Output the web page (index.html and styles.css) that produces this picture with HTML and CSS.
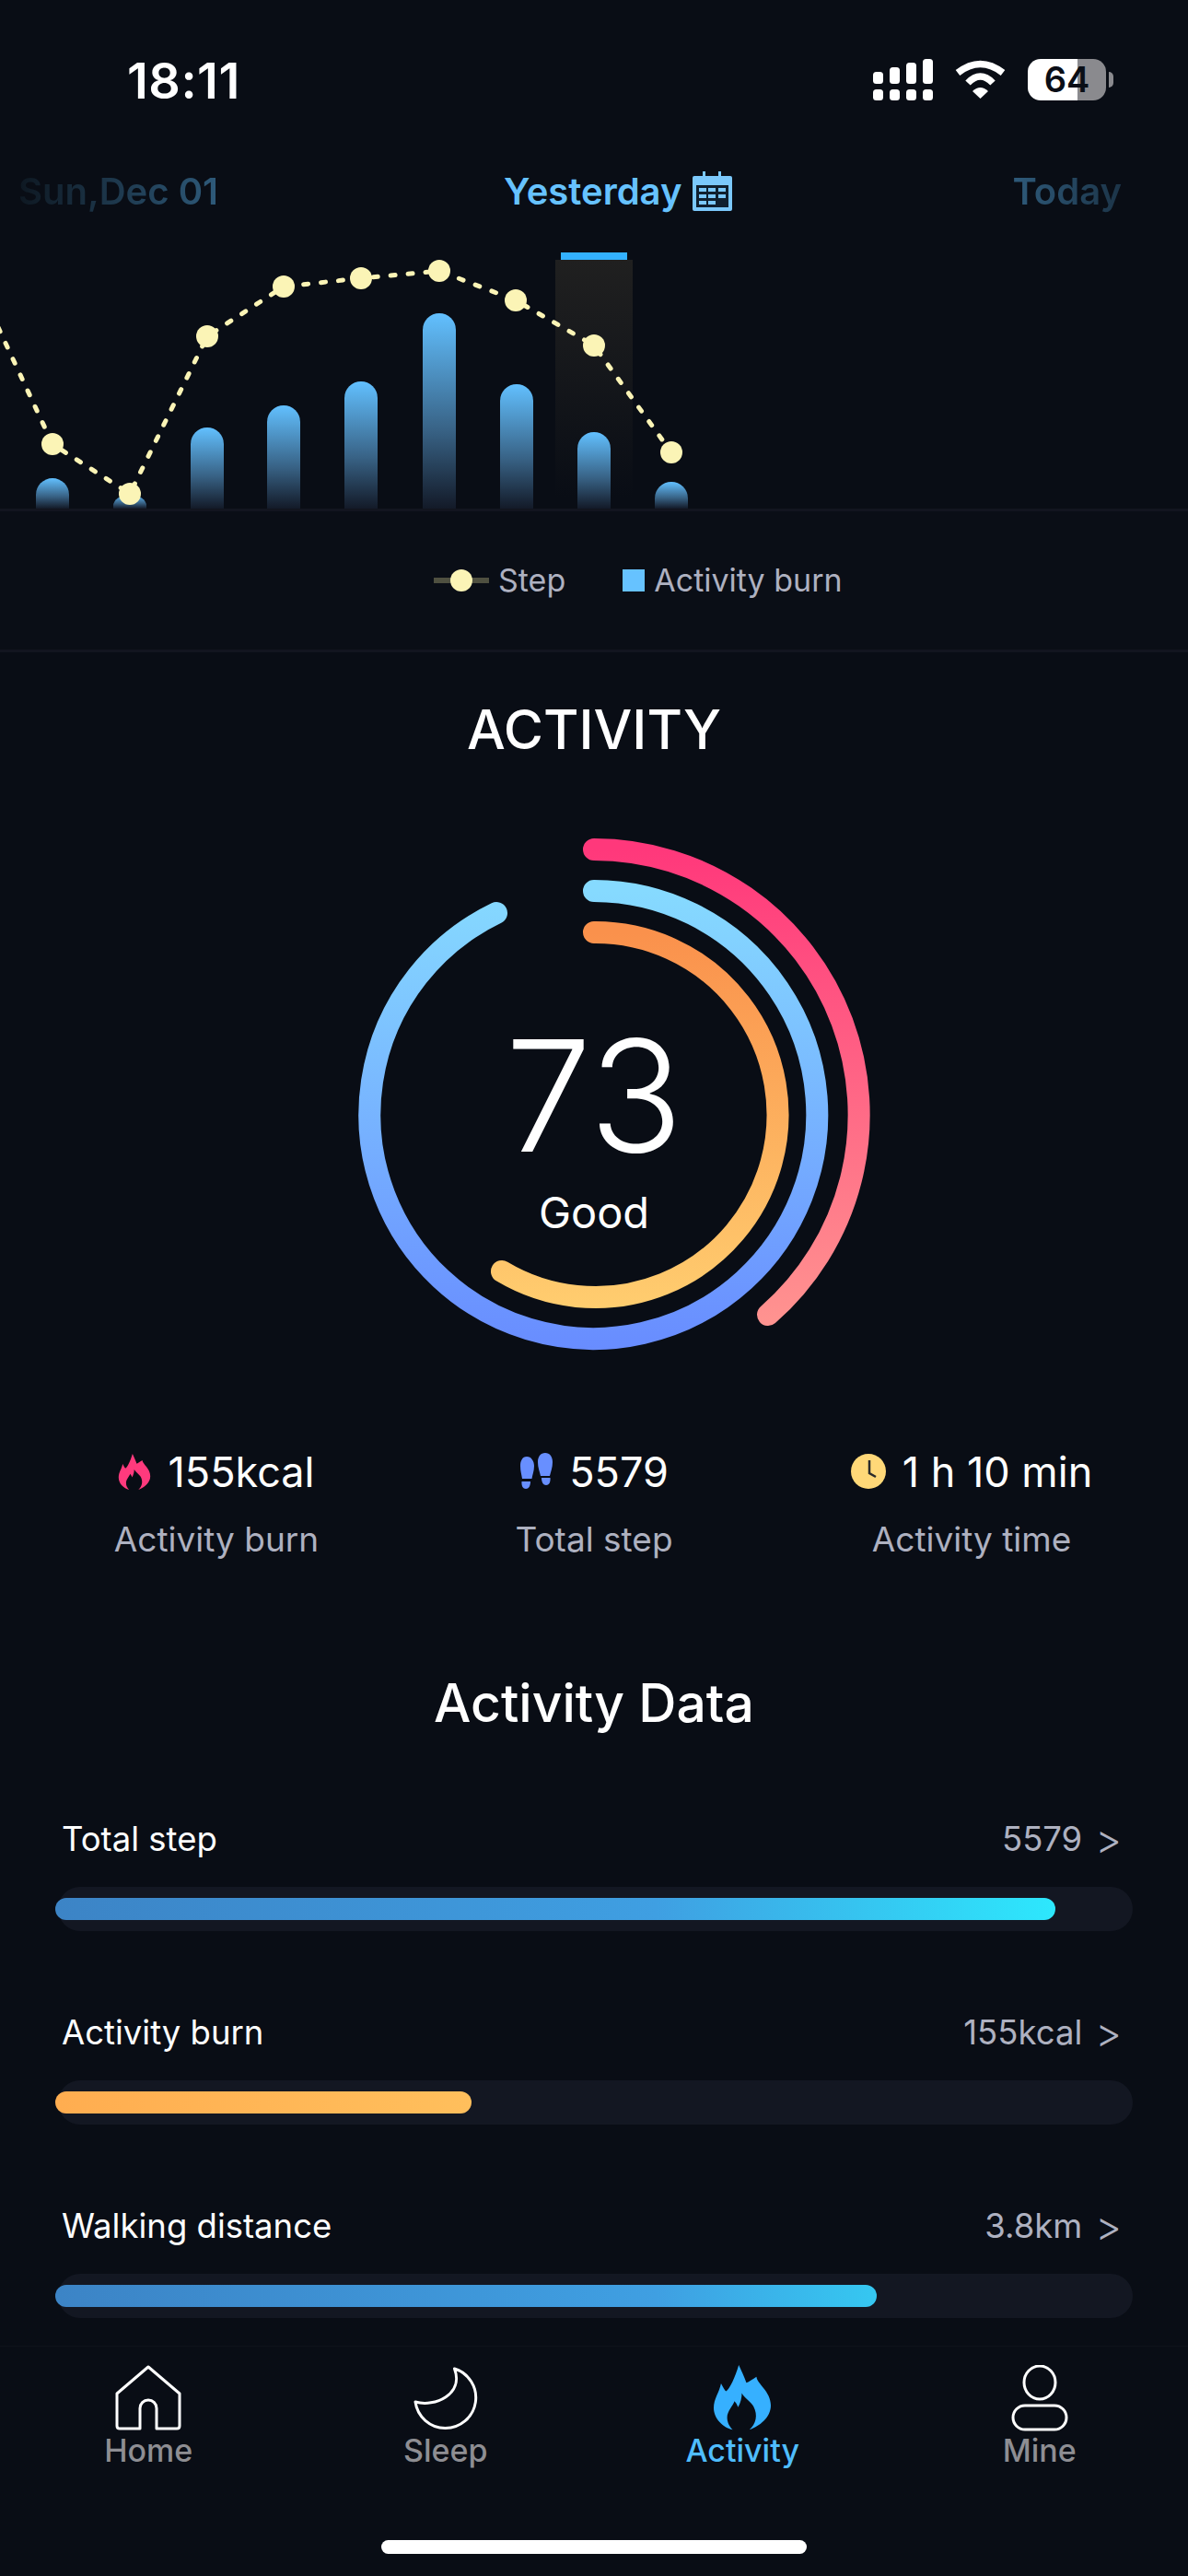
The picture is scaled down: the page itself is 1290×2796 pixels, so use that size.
FILE: index.html
```html
<!DOCTYPE html>
<html lang="en">
<head>
    <meta charset="UTF-8">
    <meta name="viewport" content="width=device-width, initial-scale=1.0">
    <title>Activity</title>
    <link rel="stylesheet" href="styles.css">
</head>
<body>
    <div class="status-bar">
        <div class="time">18:11</div>
        <div class="status-icons">
            <svg class="signal" width="65" height="45" viewBox="0 0 65 45" fill="#fff">
                <rect x="0" y="14" width="11" height="13" rx="3.5"/>
                <rect x="18" y="9" width="11" height="18" rx="3.5"/>
                <rect x="36" y="4" width="11" height="23" rx="3.5"/>
                <rect x="54" y="0" width="11" height="27" rx="3.5"/>
                <rect x="0" y="33" width="11" height="12" rx="3.5"/>
                <rect x="18" y="33" width="11" height="12" rx="3.5"/>
                <rect x="36" y="33" width="11" height="12" rx="3.5"/>
                <rect x="54" y="33" width="11" height="12" rx="3.5"/>
            </svg>
            <svg class="wifi" width="57" height="43" viewBox="0 0 57 43">
                <path d="M4 14 Q28.5 -5 53 14" fill="none" stroke="#fff" stroke-width="7.5"/>
                <path d="M15 25 Q28.5 11 42 25" fill="none" stroke="#fff" stroke-width="7.5"/>
                <path d="M20 34 Q28.5 26 37 34 L28.5 42 Z" fill="#fff"/>
            </svg>
            <div class="battery">64</div>
            <div class="battery-cap"></div>
        </div>
    </div>

    <div class="date-row">
        <span class="date date-prev">Sun,Dec 01</span>
        <span class="date-current">
            Yesterday
            <svg width="43" height="43" viewBox="0 0 43 43">
                <path d="M11 0 h3 v6 h-3z M28 0 h3 v6 h-3z" fill="#7bc8fb"/>
                <rect x="0" y="5" width="43" height="38" rx="2" fill="#7bc8fb"/>
                <rect x="4" y="15" width="35" height="24" fill="#10202f"/>
                <g fill="#7bc8fb">
                    <rect x="7" y="18" width="8" height="4"/>
                    <rect x="17" y="18" width="8" height="4"/>
                    <rect x="28" y="18" width="8" height="4"/>
                    <rect x="7" y="25" width="8" height="4"/>
                    <rect x="17" y="25" width="8" height="4"/>
                    <rect x="28" y="25" width="8" height="4"/>
                    <rect x="7" y="32" width="8" height="4"/>
                    <rect x="17" y="32" width="8" height="4"/>
                </g>
            </svg>
        </span>
        <span class="date date-next">Today</span>
    </div>

    <div class="chart">
        <svg width="1290" height="282" viewBox="0 0 1290 282">
            <defs>
                <linearGradient id="barFill" x1="0" y1="0" x2="0" y2="1">
                    <stop offset="0" stop-color="#62c0ff"/>
                    <stop offset="0.6" stop-color="#386285"/>
                    <stop offset="1" stop-color="#131a28"/>
                </linearGradient>
                <linearGradient id="selFill" x1="0" y1="0" x2="0" y2="1">
                    <stop offset="0" stop-color="#202020"/>
                    <stop offset="1" stop-color="#202020" stop-opacity="0"/>
                </linearGradient>
            </defs>
            <rect x="603" y="12" width="84" height="258" fill="url(#selFill)"/>
            <rect x="609" y="4" width="72" height="8" fill="#33b1ff"/>
            <g fill="url(#barFill)">
                <path d="M39 282 V267 A18 18 0 0 1 75 267 V282 Z"/>
                <path d="M123 282 V279 A18 12 0 0 1 159 279 V282 Z"/>
                <path d="M207 282 V212 A18 18 0 0 1 243 212 V282 Z"/>
                <path d="M290 282 V188 A18 18 0 0 1 326 188 V282 Z"/>
                <path d="M374 282 V162 A18 18 0 0 1 410 162 V282 Z"/>
                <path d="M459 282 V88 A18 18 0 0 1 495 88 V282 Z"/>
                <path d="M543 282 V165 A18 18 0 0 1 579 165 V282 Z"/>
                <path d="M627 282 V217 A18 18 0 0 1 663 217 V282 Z"/>
                <path d="M711 282 V271 A18 18 0 0 1 747 271 V282 Z"/>
            </g>
            <polyline points="-10,68 57,212 141,266 225,95 308,41 392,32 477,24 560,56 645,105 729,221" fill="none" stroke="#fbf4b6" stroke-width="5" stroke-linecap="round" stroke-dasharray="5 14"/>
            <g fill="#fbf4b6">
                <circle cx="57" cy="212" r="12"/>
                <circle cx="141" cy="266" r="12"/>
                <circle cx="225" cy="95" r="12"/>
                <circle cx="308" cy="41" r="12"/>
                <circle cx="392" cy="32" r="12"/>
                <circle cx="477" cy="24" r="12"/>
                <circle cx="560" cy="56" r="12"/>
                <circle cx="645" cy="105" r="12"/>
                <circle cx="729" cy="221" r="12"/>
            </g>
        </svg>
    </div>

    <div class="legend">
        <span class="legend-line"><span class="legend-dot"></span></span>
        <span class="legend-text">Step</span>
        <span class="legend-square"></span>
        <span class="legend-text legend-burn">Activity burn</span>
    </div>

    <h1 class="title">ACTIVITY</h1>

    <div class="rings">
        <svg width="600" height="600" viewBox="0 0 600 600" fill="none" stroke-width="24" stroke-linecap="round">
            <defs>
                <linearGradient id="ringPink" gradientUnits="userSpaceOnUse" x1="0" y1="12" x2="0" y2="530">
                    <stop offset="0" stop-color="#ff387b"/>
                    <stop offset="1" stop-color="#ff9490"/>
                </linearGradient>
                <linearGradient id="ringBlue" gradientUnits="userSpaceOnUse" x1="0" y1="57" x2="0" y2="555">
                    <stop offset="0" stop-color="#86daff"/>
                    <stop offset="1" stop-color="#688cff"/>
                </linearGradient>
                <linearGradient id="ringOrange" gradientUnits="userSpaceOnUse" x1="0" y1="102" x2="0" y2="510">
                    <stop offset="0" stop-color="#fa914c"/>
                    <stop offset="1" stop-color="#ffcd6f"/>
                </linearGradient>
            </defs>
            <path d="M300 12 A288 288 0 0 1 489 517" stroke="url(#ringPink)"/>
            <path d="M300 57 A243 243 0 1 1 194 81" stroke="url(#ringBlue)"/>
            <path d="M300 102 A198 198 0 1 1 200 470" stroke="url(#ringOrange)"/>
        </svg>
        <div class="ring-label">
            <div class="score">73</div>
            <div class="score-text">Good</div>
        </div>
    </div>

    <div class="stats">
        <div class="stat">
            <div class="stat-value">
                <svg width="36" height="39" viewBox="0 0 187 212" fill="#ff3a7d">
                    <path d="M82 0 C90 18 100 38 107 58 C116 54 128 46 140 38 C142 62 187 85 187 132 C187 172 150 200 117 212 C138 192 146 165 130 135 C122 120 100 108 92 92 C92 108 88 122 80 138 C76 128 72 122 68 118 C64 132 44 150 44 172 C44 188 52 202 62 212 C30 204 0 175 0 140 C0 110 18 90 24 60 C30 72 36 82 40 86 C52 80 70 40 82 0 Z"/>
                </svg>
                155kcal
            </div>
            <div class="stat-label">Activity burn</div>
        </div>
        <div class="stat">
            <div class="stat-value">
                <svg width="36" height="40" viewBox="0 0 36 40" fill="#688fff">
                    <path d="M8 4 C13 4 16 9 16 14 C16 20 14 24 13.5 28 H3 C2.5 24 1 20 1 14 C1 9 3 4 8 4 Z"/>
                    <path d="M2.500 31 H12 C12 36 10 39 7 39 C4 39 2 36 2.500 31 Z"/>
                    <path d="M28 0 C23 0 20 4 20 10 C20 16 22 20 23 25 H33 C34 20 36 16 36 10 C36 4 33 0 28 0 Z"/>
                    <path d="M24 27 H33.500 C34 32 32 35 29 35 C26 35 24 32 24 27 Z"/>
                </svg>
                5579
            </div>
            <div class="stat-label">Total step</div>
        </div>
        <div class="stat">
            <div class="stat-value">
                <svg width="38" height="38" viewBox="0 0 38 38">
                    <circle cx="19" cy="19" r="19" fill="#ffd878"/>
                    <path d="M20 7 V21 L27 25" fill="none" stroke="#2a2a2a" stroke-width="2.500"/>
                </svg>
                1 h 10 min
            </div>
            <div class="stat-label">Activity time</div>
        </div>
    </div>

    <h2 class="data-title">Activity Data</h2>

    <div class="data-list">
        <div class="data-row">
            <div class="data-head">
                <span>Total step</span>
                <span class="data-value">5579 <span class="chevron">&gt;</span></span>
            </div>
            <div class="track"><div class="fill fill-blue" style="width: 93.1%"></div></div>
        </div>
        <div class="data-row">
            <div class="data-head">
                <span>Activity burn</span>
                <span class="data-value">155kcal <span class="chevron">&gt;</span></span>
            </div>
            <div class="track"><div class="fill fill-orange" style="width: 38.7%"></div></div>
        </div>
        <div class="data-row">
            <div class="data-head">
                <span>Walking distance</span>
                <span class="data-value">3.8km <span class="chevron">&gt;</span></span>
            </div>
            <div class="track"><div class="fill fill-blue" style="width: 76.4%"></div></div>
        </div>
    </div>

    <div class="tab-bar">
        <div class="tabs">
            <div class="tab">
                <svg width="72" height="72" viewBox="0 0 72 72" fill="none" stroke="#fff" stroke-width="3" stroke-linejoin="round">
                    <path d="M36 2 L2 31 V66 Q2 69 5 69 H27 V47 A9 9 0 0 1 45 47 V69 H67 Q70 69 70 66 V31 Z"/>
                </svg>
                <span>Home</span>
            </div>
            <div class="tab">
                <svg width="72" height="72" viewBox="0 0 72 72" fill="none" stroke="#fff" stroke-width="3" stroke-linejoin="round">
                    <path d="M45.500 4 A33 33 0 1 1 3 40 C24 46 56 32 45.500 4 Z"/>
                </svg>
                <span>Sleep</span>
            </div>
            <div class="tab tab-active">
                <svg width="62" height="72" viewBox="0 0 187 217" fill="#36b0ff">
                    <path d="M82 0 C90 18 100 38 107 58 C116 54 128 46 140 38 C142 62 187 85 187 132 C187 172 150 200 117 212 C138 192 146 165 130 135 C122 120 100 108 92 92 C92 108 88 122 80 138 C76 128 72 122 68 118 C64 132 44 150 44 172 C44 188 52 202 62 212 C30 204 0 175 0 140 C0 110 18 90 24 60 C30 72 36 82 40 86 C52 80 70 40 82 0 Z"/>
                </svg>
                <span>Activity</span>
            </div>
            <div class="tab">
                <svg width="72" height="72" viewBox="0 0 72 72" fill="none" stroke="#fff" stroke-width="3">
                    <ellipse cx="36" cy="19" rx="17" ry="18"/>
                    <rect x="7" y="44" width="58" height="26" rx="13"/>
                </svg>
                <span>Mine</span>
            </div>
        </div>
        <div class="home-indicator"></div>
    </div>
</body>
</html>
```
FILE: styles.css
```css
body {
    margin: 0;
    width: 1290px;
    height: 2796px;
    overflow: hidden;
    background-color: #090d15;
    color: #fff;
    font-family: Inter, "Liberation Sans", sans-serif;
}
svg {
    display: block;
}

/* status bar */
.status-bar {
    display: flex;
    justify-content: space-between;
    height: 86px;
    padding: 64px 81px 0 138px;
}
.time {
    font-size: 54px;
    font-weight: 600;
    line-height: 48px;
    letter-spacing: 0.5px;
}
.status-icons {
    display: flex;
    align-items: flex-start;
}
.wifi {
    margin: 1px 23px 0 23px;
}
.battery {
    width: 85px;
    height: 45px;
    border-radius: 14px;
    background: linear-gradient(to right, #fff 54px, #8a8a8e 54px);
    color: #0a0e16;
    font-size: 38px;
    font-weight: 600;
    line-height: 45px;
    text-align: center;
}
.battery-cap {
    width: 5px;
    height: 17px;
    margin: 14px 0 0 3px;
    border-radius: 0 5px 5px 0;
    background-color: #8a8a8e;
}

/* date selector */
.date-row {
    display: flex;
    justify-content: space-between;
    align-items: center;
    height: 114px;
    margin-bottom: 6px;
    padding: 0 72px 0 20px;
    font-size: 40px;
    font-weight: 600;
}
.date {
    color: transparent;
    -webkit-background-clip: text;
    background-clip: text;
}
.date-prev {
    background-image: linear-gradient(to right, #0e1822, #2e5a7a);
}
.date-next {
    background-image: linear-gradient(to right, #2e5a7a, #1c3448);
}
.date-current {
    display: flex;
    align-items: center;
    gap: 12px;
    margin-left: 6px;
    color: #66c2ff;
}

/* chart */
.chart {
    height: 282px;
    border-bottom: 3px solid #12151f;
}
.legend {
    display: flex;
    align-items: center;
    height: 150px;
    padding-left: 471px;
    border-bottom: 3px solid #12151f;
    background-color: #0a0e16;
}
.legend-line {
    display: flex;
    justify-content: center;
    align-items: center;
    width: 60px;
    height: 6px;
    background-color: #4f5040;
}
.legend-dot {
    flex: none;
    width: 24px;
    height: 24px;
    border-radius: 50%;
    background-color: #fbf4b6;
}
.legend-text {
    margin: 0 0 2px 10px;
    color: #aeb1c0;
    font-size: 34px;
}
.legend-square {
    width: 24px;
    height: 24px;
    margin-left: 62px;
    background-color: #66c2ff;
}

/* score rings */
.title {
    height: 168px;
    margin: 0;
    font-size: 59px;
    font-weight: 500;
    line-height: 168px;
    text-align: center;
}
.rings {
    position: relative;
    width: 600px;
    height: 600px;
    margin: 34px auto 0;
}
.ring-label {
    position: absolute;
    top: 199px;
    left: 0;
    right: 0;
    text-align: center;
}
.score {
    font-size: 168px;
    font-weight: 300;
    line-height: 160px;
}
.score-text {
    margin-top: 17px;
    font-size: 47px;
    line-height: 60px;
}

/* stats */
.stats {
    display: grid;
    grid-template-columns: repeat(3, 1fr);
    margin-top: 62px;
    padding: 0 30px;
}
.stat {
    text-align: center;
}
.stat-value {
    display: flex;
    justify-content: center;
    align-items: center;
    gap: 18px;
    height: 50px;
    font-size: 45px;
}
.stat-label {
    margin-top: 24px;
    color: #aeb1c0;
    font-size: 37px;
    line-height: 50px;
}

/* activity data */
.data-title {
    height: 70px;
    margin: 118px 0 0;
    font-size: 57px;
    font-weight: 500;
    line-height: 70px;
    text-align: center;
}
.data-list {
    margin-top: 87px;
}
.data-row {
    margin-bottom: 85px;
}
.data-row:last-child {
    margin-bottom: 0;
}
.data-head {
    display: flex;
    justify-content: space-between;
    align-items: center;
    height: 50px;
    padding: 0 72px 0 67px;
    font-size: 36.5px;
}
.data-value {
    display: flex;
    align-items: center;
    gap: 14px;
    color: #aeb1c0;
}
.chevron {
    font-size: 44px;
    font-weight: 300;
    line-height: 44px;
}
.track {
    display: flex;
    align-items: center;
    height: 48px;
    margin: 27px 60px 0 63px;
    border-radius: 24px;
    background-color: #131722;
}
.fill {
    height: 24px;
    margin-left: -3px;
    border-radius: 12px;
}
.fill-blue {
    background: linear-gradient(to right, #3c84c6, #3f9fe2 60%, #2de8fd) no-repeat left / 1087px 100%;
}
.fill-orange {
    background: linear-gradient(to right, #ffad50, #ffbf5c);
}

/* tab bar */
.tab-bar {
    margin-top: 30px;
    padding-top: 20px;
    border-top: 1px solid #0f131b;
}
.tabs {
    display: grid;
    grid-template-columns: repeat(4, 1fr);
}
.tab {
    display: flex;
    flex-direction: column;
    align-items: center;
    color: #8e8e93;
    font-size: 34px;
    font-weight: 500;
    line-height: 40px;
}
.tab svg {
    margin-bottom: 1px;
}
.tab-active {
    color: #4fbdff;
}
.home-indicator {
    width: 462px;
    height: 15px;
    margin: 77px auto 0;
    border-radius: 8px;
    background-color: #fff;
}
```
